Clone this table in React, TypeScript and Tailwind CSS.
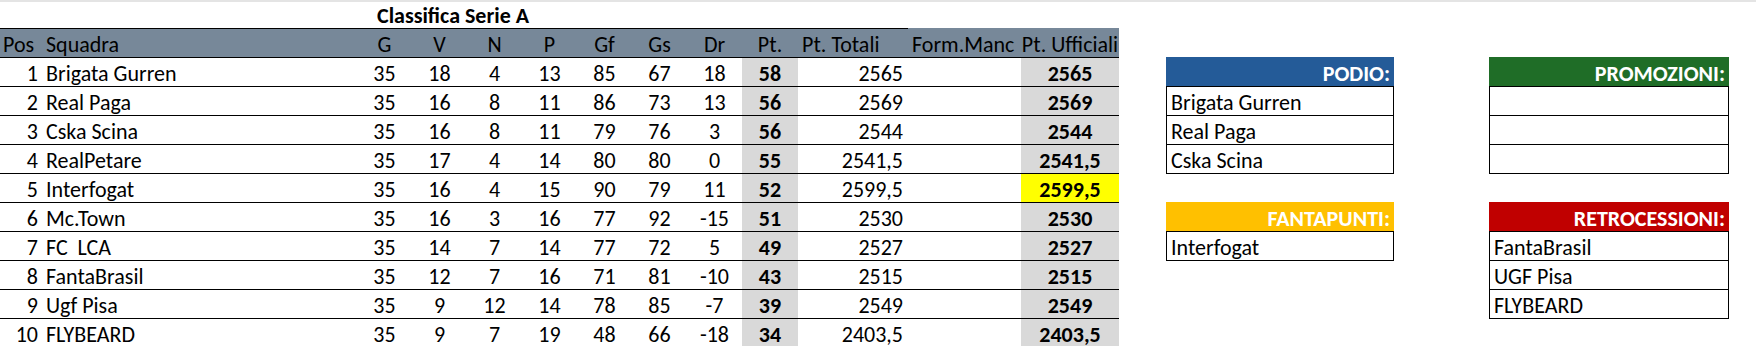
const rows = [
  { pos: 1, team: 'Brigata Gurren', g: 35, v: 18, n: 4, p: 13, gf: 85, gs: 67, dr: 18, pt: 58, tot: '2565', uff: '2565' },
  { pos: 2, team: 'Real Paga', g: 35, v: 16, n: 8, p: 11, gf: 86, gs: 73, dr: 13, pt: 56, tot: '2569', uff: '2569' },
  { pos: 3, team: 'Cska Scina', g: 35, v: 16, n: 8, p: 11, gf: 79, gs: 76, dr: 3, pt: 56, tot: '2544', uff: '2544' },
  { pos: 4, team: 'RealPetare', g: 35, v: 17, n: 4, p: 14, gf: 80, gs: 80, dr: 0, pt: 55, tot: '2541,5', uff: '2541,5' },
  { pos: 5, team: 'Interfogat', g: 35, v: 16, n: 4, p: 15, gf: 90, gs: 79, dr: 11, pt: 52, tot: '2599,5', uff: '2599,5', hl: true },
  { pos: 6, team: 'Mc.Town', g: 35, v: 16, n: 3, p: 16, gf: 77, gs: 92, dr: -15, pt: 51, tot: '2530', uff: '2530' },
  { pos: 7, team: 'FC  LCA', g: 35, v: 14, n: 7, p: 14, gf: 77, gs: 72, dr: 5, pt: 49, tot: '2527', uff: '2527' },
  { pos: 8, team: 'FantaBrasil', g: 35, v: 12, n: 7, p: 16, gf: 71, gs: 81, dr: -10, pt: 43, tot: '2515', uff: '2515' },
  { pos: 9, team: 'Ugf Pisa', g: 35, v: 9, n: 12, p: 14, gf: 78, gs: 85, dr: -7, pt: 39, tot: '2549', uff: '2549' },
  { pos: 10, team: 'FLYBEARD', g: 35, v: 9, n: 7, p: 19, gf: 48, gs: 66, dr: -18, pt: 34, tot: '2403,5', uff: '2403,5' },
]

const cols = 'grid grid-cols-[40px_317px_55px_55px_55px_55px_55px_55px_55px_56px_110px_113px_98px]'
// excel tiene il testo in basso nella cella
const cell = 'flex items-center pt-[4px]'

function Box({ title, color, items }: { title: string; color: string; items: string[] }) {
  return (
    <div>
      <div className={`h-[29px] ${cell} justify-end pr-[4px] text-white font-bold ${color}`}>
        {title}
      </div>
      <div className="border border-b-0 border-black">
        {items.map((item, i) => (
          <div key={i} className={`h-[29px] border-b border-black ${cell} pl-[4px]`}>
            {item}
          </div>
        ))}
      </div>
    </div>
  )
}

export default function App() {
  const head = ['G', 'V', 'N', 'P', 'Gf', 'Gs', 'Dr']

  return (
    <div className="w-[1756px] h-[346px] overflow-hidden bg-white text-black text-[22px] leading-none font-[Carlito,Calibri,Lato,sans-serif]">
      <div className="h-[2px] bg-[#e4e4e4]" />
      <div className="flex">
        <div className="w-[1119px]">
          <div className="h-[26px] flex items-center pl-[377px] pt-[2px] font-bold">Classifica Serie A</div>

          <div className={`${cols} h-[30px] bg-[#778899] border-b border-black`}>
            <div className={`border-t border-black ${cell} pl-[3px]`}>Pos</div>
            <div className={`border-t border-black ${cell} pl-[6px]`}>Squadra</div>
            {head.map((h) => (
              <div key={h} className={`border-t border-black ${cell} justify-center`}>{h}</div>
            ))}
            <div className={`border-t border-black ${cell} justify-center`}>Pt.</div>
            <div className={`border-t border-black ${cell} pl-[4px]`}>Pt. Totali</div>
            <div className={`border-t border-transparent ${cell} pl-[4px] whitespace-nowrap`}>Form.Manc</div>
            <div className={`border-t border-transparent ${cell} justify-center whitespace-nowrap`}>Pt. Ufficiali</div>
          </div>

          {rows.map((r) => (
            <div key={r.pos} className={`${cols} h-[29px] border-b border-black`}>
              <div className={`${cell} justify-end pr-[2px]`}>{r.pos}</div>
              <div className={`${cell} pl-[6px] whitespace-pre`}>{r.team}</div>
              {[r.g, r.v, r.n, r.p, r.gf, r.gs, r.dr].map((x, i) => (
                <div key={i} className={`${cell} justify-center`}>{x}</div>
              ))}
              <div className={`${cell} justify-center bg-[#d9d9d9] font-bold`}>{r.pt}</div>
              <div className={`${cell} justify-end pr-[5px]`}>{r.tot}</div>
              <div />
              <div className={`${cell} justify-center font-bold ${r.hl ? 'bg-[#ffff00]' : 'bg-[#d9d9d9]'}`}>
                {r.uff}
              </div>
            </div>
          ))}
        </div>

        <div className="pl-[47px] pt-[55px]">
          <div className="grid grid-cols-[228px_240px] gap-x-[95px] gap-y-[28px] items-start">
            <Box title="PODIO:" color="bg-[#245b98]" items={['Brigata Gurren', 'Real Paga', 'Cska Scina']} />
            <Box title="PROMOZIONI:" color="bg-[#1f6d27]" items={['', '', '']} />
            <Box title="FANTAPUNTI:" color="bg-[#ffc000]" items={['Interfogat']} />
            <Box title="RETROCESSIONI:" color="bg-[#c00000]" items={['FantaBrasil', 'UGF Pisa', 'FLYBEARD']} />
          </div>
        </div>
      </div>
    </div>
  )
}
